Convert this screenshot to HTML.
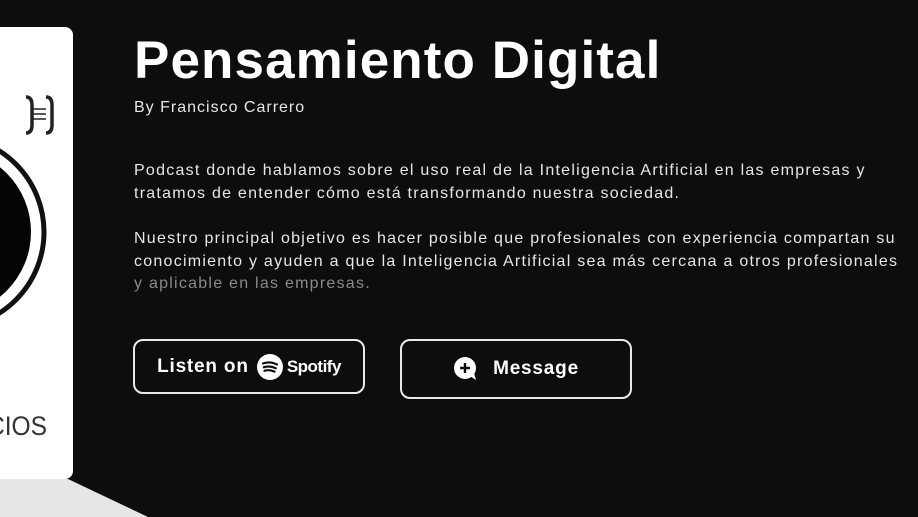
<!DOCTYPE html>
<html><head><meta charset="utf-8">
<style>
html,body{margin:0;padding:0;width:918px;height:517px;overflow:hidden;background:#0d0d0d;font-family:"Liberation Sans",sans-serif;color:#fff;position:relative}
.card{position:absolute;left:-20px;top:27px;width:93px;height:452px;background:#fff;border-radius:8px;overflow:hidden}
.gray{position:absolute;left:0;top:0;width:918px;height:517px}
h1{position:absolute;left:134px;top:30px;margin:0;font-size:53px;font-weight:bold;letter-spacing:1.1px;white-space:nowrap}
.by{position:absolute;left:134px;top:99px;font-size:16px;color:#e6e6e6;letter-spacing:1px}
.p{position:absolute;left:134px;font-size:16px;line-height:22.5px;color:#e6e6e6;width:800px;letter-spacing:1.25px;white-space:nowrap}
.btn{position:absolute;border:2px solid #e8e8e8;border-radius:10px;box-sizing:border-box;display:flex;align-items:center;justify-content:center;font-weight:bold;font-size:19px;letter-spacing:0.8px}
</style></head><body>
<svg class="gray" viewBox="0 0 918 517"><polygon points="0,479 68,479 148,517 0,517" fill="#e6e6e6"/></svg>
<div class="card">
<svg width="93" height="452" viewBox="0 0 93 452">
<circle cx="-32" cy="205" r="96" fill="none" stroke="#111" stroke-width="5"/>
<circle cx="-32" cy="205" r="83" fill="#050505"/>
<path d="M46 70 q6 0 6 8 v20 q0 8 -6 8" stroke="#222" stroke-width="3.5" fill="none"/>
<path d="M66 70 q6 0 6 8 v20 q0 8 -6 8" stroke="#222" stroke-width="3.5" fill="none"/>
<path d="M52 82 h14 M52 87 h14 M52 92 h14" stroke="#222" stroke-width="1.5"/>
<text x="67" y="408" text-anchor="end" font-family="Liberation Sans" font-size="27" fill="#333" textLength="60" lengthAdjust="spacingAndGlyphs">CIOS</text>
</svg>
</div>
<h1>Pensamiento Digital</h1>
<div class="by">By Francisco Carrero</div>
<div class="p" style="top:160px">Podcast donde hablamos sobre el uso real de la Inteligencia Artificial en las empresas y<br>tratamos de entender cómo está transformando nuestra sociedad.</div>
<div class="p" style="top:228px">Nuestro principal objetivo es hacer posible que profesionales con experiencia compartan su<br>conocimiento y ayuden a que la Inteligencia Artificial sea más cercana a otros profesionales<br><span style="color:#8a8a8a">y aplicable en las empresas.</span></div>
<div class="btn" style="left:133px;top:339px;width:232px;height:55px">Listen on&nbsp;
<svg width="26" height="26" viewBox="0 0 26 26" style="margin:0 4px 0 2px"><circle cx="13" cy="13" r="13" fill="#fff"/><path d="M6 9.5 q7-2.5 14 1 M6.8 13.3 q6-2 12 1 M7.5 16.8 q5-1.5 10 0.8" stroke="#0d0d0d" stroke-width="2.2" fill="none" stroke-linecap="round"/></svg><span style="font-size:17px;letter-spacing:-0.5px">Spotify</span></div>
<div class="btn" style="left:400px;top:339px;width:232px;height:60px">
<svg width="26" height="26" viewBox="0 0 26 26" style="margin-right:14px"><circle cx="12" cy="12" r="11" fill="#fff"/><path d="M17 20 l6 4 -2-7z" fill="#fff"/><path d="M12 7v10M7 12h10" stroke="#0d0d0d" stroke-width="2.4"/></svg>Message</div>
</body></html>
